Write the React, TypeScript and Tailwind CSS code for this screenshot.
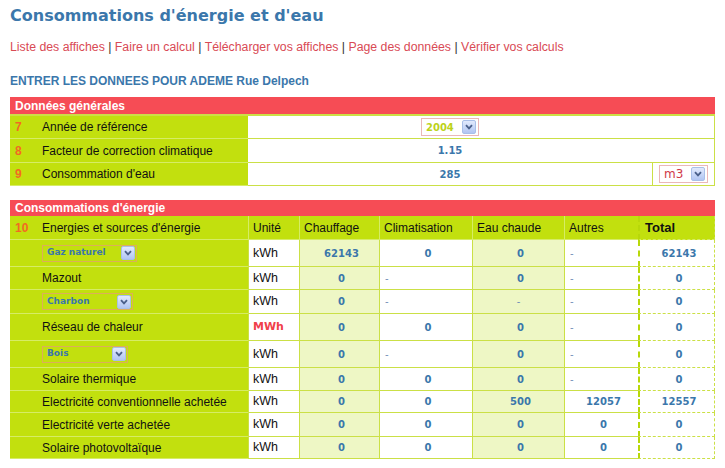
import React from "react";

const Chevron = () => (
  <svg width="8" height="6" viewBox="0 0 8 6">
    <polyline points="1,1.2 4,4.4 7,1.2" fill="none" stroke="#4a5f8a" strokeWidth="1.8" />
  </svg>
);

const ArrowBtn = () => (
  <div className="flex h-[14px] w-[14px] items-center justify-center rounded-[2px] border border-[#a9bfe9] bg-gradient-to-b from-[#e2eafd] to-[#b1c5f2]">
    <Chevron />
  </div>
);

const EnergySelect = ({ label, w }: { label: string; w: string }) => (
  <div className={`flex h-[17px] items-center justify-between border border-[#dcae5a] pl-[4px] pr-[1px] ${w}`}>
    <span className="font-['DejaVu_Sans'] text-[9px] font-bold text-[#3b77ab]">{label}</span>
    <ArrowBtn />
  </div>
);

type Row = {
  label: React.ReactNode;
  unit: "kWh" | "MWh";
  vals: string[];
  h: string;
};

const rows: Row[] = [
  { label: <EnergySelect label="Gaz naturel" w="w-[95px]" />, unit: "kWh", vals: ["62143", "0", "0", "-", "62143"], h: "h-[27px]" },
  { label: "Mazout", unit: "kWh", vals: ["0", "-", "0", "-", "0"], h: "h-[23px]" },
  { label: <EnergySelect label="Charbon" w="w-[91px]" />, unit: "kWh", vals: ["0", "-", "~", "-", "0"], h: "h-[24px]" },
  { label: "Réseau de chaleur", unit: "MWh", vals: ["0", "0", "0", "-", "0"], h: "h-[27px]" },
  { label: <EnergySelect label="Bois" w="w-[86px]" />, unit: "kWh", vals: ["0", "-", "0", "-", "0"], h: "h-[27px]" },
  { label: "Solaire thermique", unit: "kWh", vals: ["0", "0", "0", "-", "0"], h: "h-[23px]" },
  { label: "Electricité conventionnelle achetée", unit: "kWh", vals: ["0", "0", "500", "12057", "12557"], h: "h-[22px]" },
  { label: "Electricité verte achetée", unit: "kWh", vals: ["0", "0", "0", "0", "0"], h: "h-[24px]" },
  { label: "Solaire photovoltaïque", unit: "kWh", vals: ["0", "0", "0", "0", "0"], h: "h-[22px]" },
];

const Val = ({ v }: { v: string }) => {
  if (v === "-")
    return <span className="pl-[5px] font-['DejaVu_Sans'] text-[10px] text-[#6f8fb8]">-</span>;
  if (v === "~")
    return <span className="w-full text-center font-['DejaVu_Sans'] text-[10px] text-[#6f8fb8]">-</span>;
  return <span className="w-full pl-[4px] text-center font-['DejaVu_Sans'] text-[10px] font-bold text-[#3b77ab]">{v}</span>;
};

const valBg = ["bg-[#eef7c5]", "bg-white", "bg-[#eef7c5]", "bg-white", "bg-white"];

export default function App() {
  const line = "border-[#cbe046]";
  return (
    <div className="h-[468px] w-[725px] overflow-hidden bg-white font-['Liberation_Sans',sans-serif] text-[12px] text-[#111]">
      <div className="px-[10px]">
        <h1 className="pt-[5px] font-['DejaVu_Sans'] text-[16px] font-bold leading-[22px] text-[#3b77ab]">
          Consommations d'énergie et d'eau
        </h1>
        <div className="mt-[13px] text-[12.3px] leading-[14px] text-[#d94a55]">
          <span>Liste des affiches</span> <span className="text-[#333]">|</span> <span>Faire un calcul</span>{" "}
          <span className="text-[#333]">|</span> <span>Télécharger vos affiches</span>{" "}
          <span className="text-[#333]">|</span> <span>Page des données</span> <span className="text-[#333]">|</span>{" "}
          <span>Vérifier vos calculs</span>
        </div>
        <div className="mt-[20px] font-bold leading-[14px] text-[#3b77ab]">ENTRER LES DONNEES POUR ADEME Rue Delpech</div>

        {/* Section 1 */}
        <div className="mt-[9px] flex h-[17px] items-center bg-[#f64c55] pl-[5px] font-bold text-white">Données générales</div>
        <div className={`grid grid-cols-[238px_404px_63px] border-t-2 ${line}`}>
          {[
            { n: "7", label: "Année de référence", h: "h-[23px]" },
            { n: "8", label: "Facteur de correction climatique", h: "h-[24px]" },
            { n: "9", label: "Consommation d'eau", h: "h-[23px]" },
          ].map((r, i) => (
            <React.Fragment key={r.n}>
              <div className={`flex items-center border-b border-[#d6ec66] bg-[#c2e00e] ${r.h}`}>
                <span className="w-[32px] pl-[5px] font-bold text-[#f26a22]">{r.n}</span>
                <span>{r.label}</span>
              </div>
              <div className={`flex items-center justify-center border-b ${line} bg-white`}>
                {i === 0 && (
                  <div className="flex h-[18px] w-[58px] items-center justify-between border border-[#eab8b8] bg-white pl-[4px] pr-[2px]">
                    <span className="font-['DejaVu_Sans'] text-[10px] font-bold text-[#bdd21a]">2004</span>
                    <ArrowBtn />
                  </div>
                )}
                {i === 1 && <span className="font-['DejaVu_Sans'] text-[10px] font-bold text-[#3b77ab]">1.15</span>}
                {i === 2 && <span className="font-['DejaVu_Sans'] text-[10px] font-bold text-[#3b77ab]">285</span>}
              </div>
              <div className={`flex items-center justify-center border-b border-r ${line} bg-white ${i === 2 ? "border-l" : ""}`}>
                {i === 2 && (
                  <div className="flex h-[18px] w-[49px] items-center justify-between border border-[#eab8b8] bg-white pl-[4px] pr-[2px]">
                    <span className="font-['DejaVu_Sans'] text-[12px] text-[#d03848]">m3</span>
                    <ArrowBtn />
                  </div>
                )}
              </div>
            </React.Fragment>
          ))}
        </div>

        {/* Section 2 */}
        <div className="mt-[14px] flex h-[16px] items-center bg-[#f64c55] pl-[5px] font-bold text-white">Consommations d'énergie</div>
        <div className="grid grid-cols-[238px_52px_80px_93px_92px_73px_77px]">
          {/* header */}
          <div className="flex h-[24px] items-center border-b border-[#d6ec66] bg-[#c2e00e]">
            <span className="w-[32px] pl-[5px] font-bold text-[#f26a22]">10</span>
            <span>Energies et sources d'énergie</span>
          </div>
          {["Unité", "Chauffage", "Climatisation", "Eau chaude", "Autres"].map((h, i) => (
            <div
              key={h}
              className={`flex h-[24px] items-center border-b border-[#d6ec66] bg-[#c2e00e] pl-[4px] ${i === 0 ? "border-l" : ""} ${i < 4 ? "border-r" : ""}`}
            >
              {h}
            </div>
          ))}
          <div className="flex h-[24px] items-center border-b border-l-2 border-r border-dashed border-b-[#d6ec66] border-l-[#b8d80a] border-r-[#cbe046] bg-[#c2e00e] pl-[5px] text-[13px] font-bold">
            Total
          </div>

          {rows.map((r, ri) => (
            <React.Fragment key={ri}>
              <div className={`flex items-center border-b border-[#d6ec66] bg-[#c2e00e] pl-[32px] ${r.h}`}>{r.label}</div>
              <div className={`flex items-center border-b border-l border-r ${line} bg-white pl-[4px] ${r.h}`}>
                {r.unit === "MWh" ? (
                  <span className="font-['DejaVu_Sans'] text-[11px] font-bold text-[#f0404a]">MWh</span>
                ) : (
                  <span className="text-[12.5px]">kWh</span>
                )}
              </div>
              {r.vals.slice(0, 4).map((v, vi) => (
                <div key={vi} className={`flex items-center border-b ${line} ${vi < 3 ? "border-r" : ""} ${valBg[vi]} ${r.h}`}>
                  <Val v={v} />
                </div>
              ))}
              <div className={`flex items-center border-b border-l-2 border-r border-dashed border-b-[#cbe046] border-l-[#b8d80a] border-r-[#cbe046] bg-white ${r.h}`}>
                <Val v={r.vals[4]} />
              </div>
            </React.Fragment>
          ))}
        </div>
      </div>
    </div>
  );
}
